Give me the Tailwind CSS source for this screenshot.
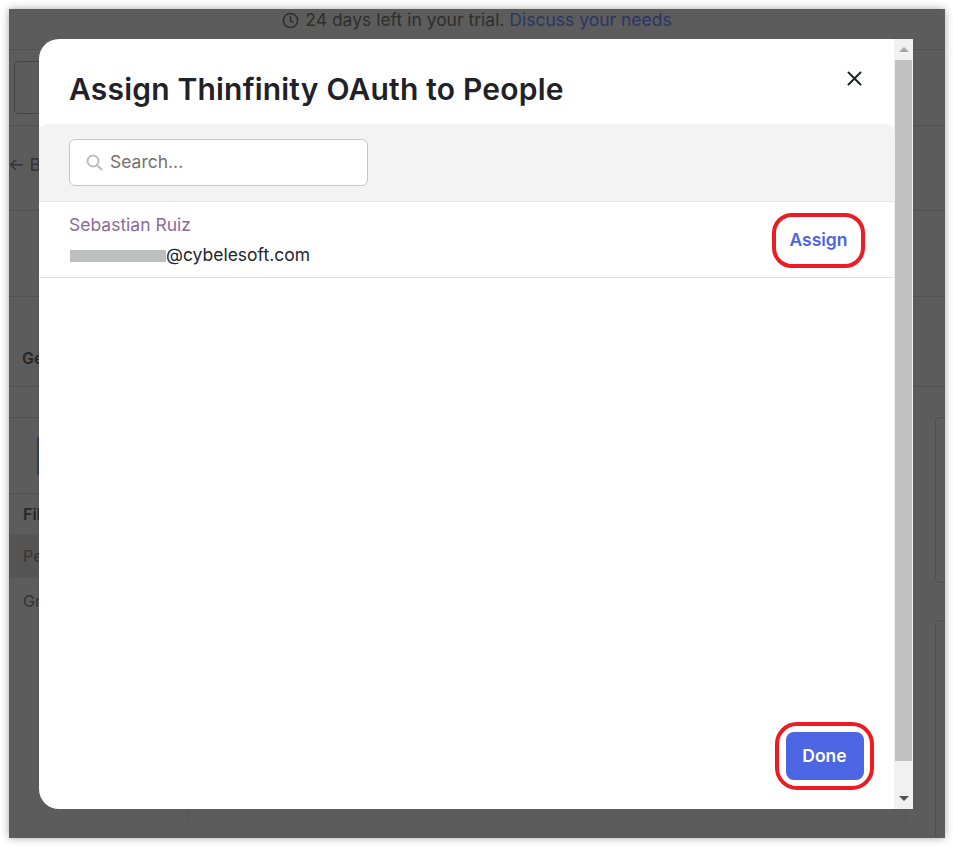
<!DOCTYPE html>
<html lang="en">
<head>
  <meta charset="UTF-8" />
  <title>Assign Thinfinity OAuth to People</title>
  <script src="https://cdn.jsdelivr.net/npm/@tailwindcss/browser@4"></script>
</head>
<body class="bg-white h-[846px] overflow-hidden pt-[9px] font-['Inter',sans-serif]">
  <!-- browser window with dimmed app behind the dialog -->
  <div class="relative ml-[9px] w-[936px] h-[829px] bg-[#5c5c5c] overflow-hidden shadow-[0_0_8px_rgba(0,0,0,0.35)]">
    <div class="h-[41px] border-b border-[#505358] flex items-center justify-center gap-[6px] text-[17.5px] text-[#2e2e2e] pb-[17px]">
      <svg class="w-[17px] h-[17px]" viewBox="0 0 24 24" fill="none" stroke="#2e2e2e" stroke-width="2.2" stroke-linecap="round"><circle cx="12" cy="12" r="10"/><path d="M12 6.5V12l3.5 2.5"/></svg>
      <span>24 days left in your trial. <span class="text-[#2b3565]">Discuss your needs</span></span>
    </div>
    <div class="h-[76px] border-b border-[#505050] pl-[5px] pt-[11px]">
      <div class="w-[100px] h-[53px] border border-[#454545] rounded-[5px]"></div>
    </div>
    <div class="h-[85px] border-b border-[#505050] flex items-center text-[17.5px] text-[#333] pb-[5px]"><span class="ml-[-1px]">← Back</span></div>
    <div class="h-[86px] border-b border-[#505050]"></div>
    <div class="h-[90px] border-b border-[#505050] pl-[13px] pt-[49px] text-[16px] font-semibold text-[#262626]">General</div>
    <div class="flex h-[433px]">
      <div class="w-[179px] border-r border-[#535353] shrink-0">
        <div class="h-[77px] border-y border-[#505050] mt-[30px] pt-[18px] pl-[28px]">
          <div class="w-[40px] h-[40px] bg-[#2f3a6b] rounded-[3px]"></div>
        </div>
        <div class="h-[40px] flex items-center pl-[14px] text-[16px] font-semibold text-[#262626]">Filter</div>
        <div class="h-[44px] bg-[#555] flex items-center pl-[14px] text-[16px] text-[#333]">People</div>
        <div class="h-[46px] flex items-center pl-[14px] text-[16px] text-[#333]">Groups</div>
      </div>
      <div class="flex-1 relative">
        <div class="absolute right-[39px] top-0 bottom-0 w-px bg-[#535353]"></div>
        <div class="absolute right-0 top-[30px] w-[10px] h-[166px] border border-r-0 border-[#505050] rounded-l-[5px]"></div>
        <div class="absolute right-0 top-[233px] w-[10px] h-[220px] border border-r-0 border-[#505050] rounded-l-[5px]"></div>
      </div>
    </div>

    <!-- dialog -->
    <div class="absolute left-[30px] top-[30px] w-[874px] h-[770px] bg-white rounded-l-[20px] flex overflow-hidden">
      <div class="w-[855px] flex flex-col">
        <div class="h-[85px] pl-[30px] pr-[30px] flex justify-between">
          <h1 class="pt-[32px] text-[30px] leading-[36px] font-semibold tracking-[0.2px] text-[#1f2228]">Assign Thinfinity OAuth to People</h1>
          <svg class="w-[15px] h-[15px] mt-[32px] mr-[2px]" viewBox="0 0 15 15" fill="none" stroke="#1f2228" stroke-width="2" stroke-linecap="round"><path d="M1.5 1.5l12 12M13.5 1.5l-12 12"/></svg>
        </div>
        <div class="h-[78px] bg-[#f3f3f3] rounded-t-[8px] border-b border-[#e4e4e4] pl-[30px] pt-[15px]">
          <div class="w-[299px] h-[47px] bg-white border border-[#c6c6c6] rounded-[6px] flex items-center pl-[16px] gap-[7px] text-[17.5px] text-[#77706a]">
            <svg class="w-[17px] h-[17px]" viewBox="0 0 17 17" fill="none" stroke="#bdbdbd" stroke-width="2" stroke-linecap="round"><circle cx="7" cy="7" r="5.5"/><path d="M11.2 11.2l4.3 4.3"/></svg>
            <span>Search...</span>
          </div>
        </div>
        <div class="h-[76px] border-b border-[#e2e2e2] flex justify-between pl-[30px]">
          <div>
            <div class="pt-[12px] text-[17.5px] leading-[22px] text-[#8c6a97]">Sebastian Ruiz</div>
            <div class="mt-[8px] flex items-center text-[17.5px] leading-[22px] text-[#22252b]">
              <span class="ml-[1px] w-[96px] h-[12px] mt-[1px] bg-[#bdbebe]"></span><span>@cybelesoft.com</span>
            </div>
          </div>
          <div class="mr-[29px] mt-[11px] w-[93px] h-[55px] border-[4px] border-[#ed1c24] rounded-[20px] flex items-center justify-center text-[17.5px] font-semibold text-[#4f63e0]">Assign</div>
        </div>
        <div class="flex-1 flex justify-end items-start pt-[444px] pr-[20px]">
          <div class="w-[99px] h-[68px] border-[4px] border-[#ed1c24] rounded-[22px] flex items-center justify-center">
            <div class="w-[78px] h-[48px] bg-[#4c65e2] rounded-[8px] flex items-center justify-center text-[17.5px] font-semibold text-white">Done</div>
          </div>
        </div>
      </div>
      <!-- scrollbar -->
      <div class="w-[19px] bg-[#f1f1f1] flex flex-col items-center">
        <div class="h-[21px] flex items-center justify-center"><div class="w-0 h-0 border-x-[5px] border-x-transparent border-b-[5px] border-b-[#a8a8a8]"></div></div>
        <div class="w-[17px] h-[701px] bg-[#c1c1c1]"></div>
        <div class="flex-1 flex items-center justify-center"><div class="w-0 h-0 border-x-[5px] border-x-transparent border-t-[5px] border-t-[#505050] mt-[26px]"></div></div>
      </div>
    </div>
  </div>
</body>
</html>
